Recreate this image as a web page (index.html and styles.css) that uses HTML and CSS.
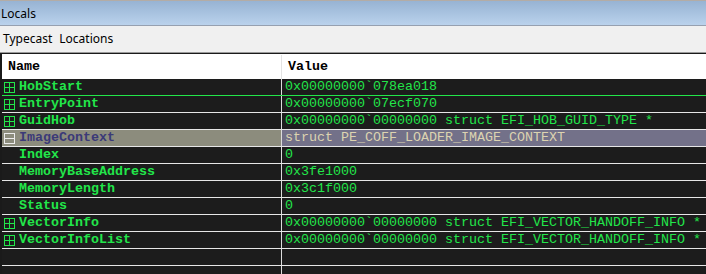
FILE: index.html
```html
<!DOCTYPE html>
<html>
<head>
<meta charset="utf-8">
<link rel="stylesheet" href="styles.css">
</head>
<body>
<div class="window">
  <div class="title">Locals</div>
  <div class="toolbar"><span class="tb-item">Typecast</span><span class="tb-item">Locations</span></div>
  <div class="grid">
    <div class="row head"><div class="cell name">Name</div><div class="cell val">Value</div></div>
    <div class="row focus"><div class="cell name"><svg class="exp" width="11" height="11" viewBox="0 0 11 11"><rect x="0.5" y="0.5" width="10" height="10"/><path d="M5.5 1V10M1 5.5H10"/></svg>HobStart</div><div class="cell val">0x00000000`078ea018</div></div>
    <div class="row"><div class="cell name"><svg class="exp" width="11" height="11" viewBox="0 0 11 11"><rect x="0.5" y="0.5" width="10" height="10"/><path d="M5.5 1V10M1 5.5H10"/></svg>EntryPoint</div><div class="cell val">0x00000000`07ecf070</div></div>
    <div class="row"><div class="cell name"><svg class="exp" width="11" height="11" viewBox="0 0 11 11"><rect x="0.5" y="0.5" width="10" height="10"/><path d="M5.5 1V10M1 5.5H10"/></svg>GuidHob</div><div class="cell val">0x00000000`00000000 struct EFI_HOB_GUID_TYPE *</div></div>
    <div class="row sel"><div class="cell name"><svg class="exp minus" width="11" height="11" viewBox="0 0 11 11"><rect x="0.5" y="0.5" width="10" height="10"/><path d="M1 5.5H10"/></svg>ImageContext</div><div class="cell val">struct PE_COFF_LOADER_IMAGE_CONTEXT</div></div>
    <div class="row"><div class="cell name child">Index</div><div class="cell val">0</div></div>
    <div class="row"><div class="cell name child">MemoryBaseAddress</div><div class="cell val">0x3fe1000</div></div>
    <div class="row"><div class="cell name child">MemoryLength</div><div class="cell val">0x3c1f000</div></div>
    <div class="row"><div class="cell name child">Status</div><div class="cell val">0</div></div>
    <div class="row"><div class="cell name"><svg class="exp" width="11" height="11" viewBox="0 0 11 11"><rect x="0.5" y="0.5" width="10" height="10"/><path d="M5.5 1V10M1 5.5H10"/></svg>VectorInfo</div><div class="cell val">0x00000000`00000000 struct EFI_VECTOR_HANDOFF_INFO *</div></div>
    <div class="row"><div class="cell name"><svg class="exp" width="11" height="11" viewBox="0 0 11 11"><rect x="0.5" y="0.5" width="10" height="10"/><path d="M5.5 1V10M1 5.5H10"/></svg>VectorInfoList</div><div class="cell val">0x00000000`00000000 struct EFI_VECTOR_HANDOFF_INFO *</div></div>
    <div class="row"><div class="cell name"></div><div class="cell val"></div></div>
    <div class="row"><div class="cell name"></div><div class="cell val"></div></div>
  </div>
</div>
</body>
</html>
```
FILE: styles.css
```css
html, body {
  margin: 0;
  padding: 0;
  background: #1c1c1c;
  overflow: hidden;
}
.window {
  width: 706px;
  height: 274px;
  overflow: hidden;
}
.title {
  height: 24px;
  border-top: 1px solid #b3aca6;
  border-bottom: 1px solid #96a0b0;
  background: linear-gradient(#97b3d3, #bad2ec);
  font-family: "Noto Sans", "Open Sans", sans-serif;
  font-size: 12px;
  line-height: 25px;
  padding-left: 1px;
  color: #000;
}
.toolbar {
  height: 26px;
  background: #f0f0f0;
  display: flex;
  gap: 7px;
  padding-left: 3px;
  font-family: "Noto Sans", "Open Sans", sans-serif;
  font-size: 12px;
  line-height: 25px;
  color: #000;
  border-bottom: 1px solid #9a9a9a;
}
.grid {
  border-top: 1px solid #1a1a1a;
  border-left: 2px solid #1a1a1a;
  font-family: "Liberation Mono", "Courier New", monospace;
  font-size: 13.33px;
}
.row {
  display: flex;
  height: 16px;
  line-height: 16px;
  border-bottom: 1px solid #e6e6e6;
  background: #1c1c1c;
  color: #22e64a;
  white-space: nowrap;
}
.row.focus {
  border-bottom-color: #22e64a;
}
.cell {
  overflow: hidden;
  display: flex;
  align-items: center;
}
.name {
  width: 279px;
  flex: none;
  border-right: 1px solid #dcdcdc;
  font-weight: bold;
}
.name.child {
  padding-left: 17px;
  width: 262px;
}
.val {
  flex: 1;
  padding-left: 3px;
}
.exp {
  flex: none;
  margin: 0 4px 0 2px;
  fill: none;
  stroke: #22e64a;
  stroke-width: 1;
}
.row.head {
  height: 24px;
  line-height: 24px;
  padding-top: 1px;
  background: #fff;
  color: #000;
  border-bottom: none;
}
.row.head .name {
  padding-left: 6px;
  width: 273px;
  border-right-color: #e3e3e3;
}
.row.head .val {
  padding-left: 6px;
  font-weight: bold;
}
.row.sel .name {
  background: #8c8c7d;
  color: #3b3a78;
}
.row.sel .val {
  background: #737189;
  color: #dcd3b0;
}
.exp.minus {
  stroke: #ececec;
}
```
